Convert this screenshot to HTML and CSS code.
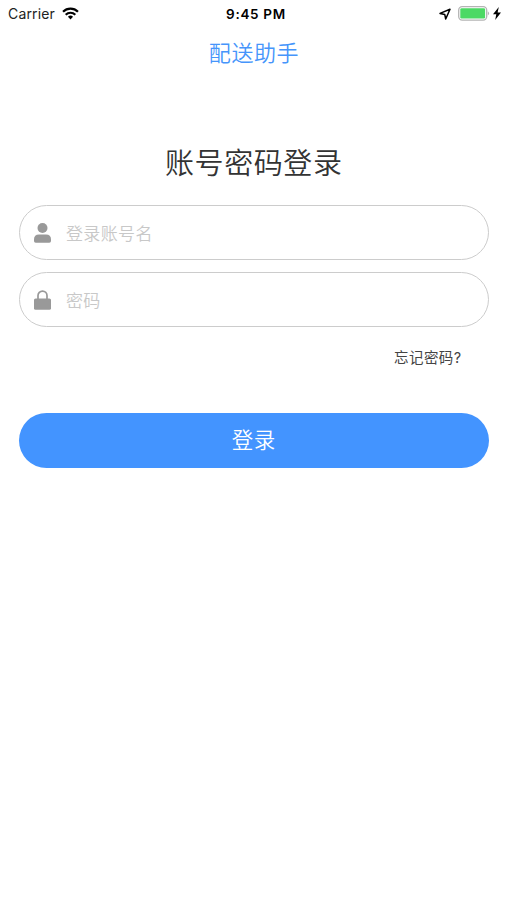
FILE: index.html
```html
<!DOCTYPE html>
<html lang="zh-CN">
<head>
<meta charset="utf-8">
<title>配送助手</title>
<link rel="stylesheet" href="styles.css">
</head>
<body>
<header class="status">
  <div class="status-left"><span class="carrier">Carrier</span>
    <svg class="wifi" viewBox="0 0 18 13" width="17" height="13"><path d="M9 12.800 6.300 10a3.900 3.900 0 0 1 5.400 0z" fill="#000"/><path d="M3.900 7.800a7.300 7.300 0 0 1 10.200 0M1.100 4.600a11.200 11.200 0 0 1 15.800 0" fill="none" stroke="#000" stroke-width="2.300"/></svg>
  </div>
  <div class="time">9:45 PM</div>
  <div class="status-right">
    <svg class="location" viewBox="0 0 12 12" width="12" height="12"><path d="M1 5.400 11 1.200 6.700 11 5.800 6.600z" fill="none" stroke="#000" stroke-width="1.500" stroke-linejoin="round"/></svg>
    <svg class="battery" viewBox="0 0 32 15" width="32" height="15"><rect x=".7" y=".7" width="28" height="13.400" rx="3.500" fill="#fff" stroke="#b4b4b4" stroke-width="1.300"/><rect x="2.300" y="2.300" width="24.800" height="10.200" rx="1.300" fill="#4cd964"/><path d="M29.800 5.200q2.600 2.200 0 4.400z" fill="#b4b4b4"/></svg>
    <svg class="bolt" viewBox="0 0 8 13" width="8" height="13"><path d="M5.800 0 0 7.200h3.300L2.200 13 8 5.400H4.600z"/></svg>
  </div>
</header>
<div class="navbar">配送助手</div>
<main class="login">
  <h1 class="title">账号密码登录</h1>
  <div class="field">
    <svg class="icon" viewBox="0 0 17 20" width="17" height="20"><circle cx="8.500" cy="5" r="5"/><path d="M0 18v-1.500Q0 11.500 5 11.500h7q5 0 5 5V18q0 1.700-1.700 1.700H1.700Q0 19.700 0 18z"/></svg>
    <span>登录账号名</span>
  </div>
  <div class="field">
    <svg class="icon" viewBox="0 0 17 20" width="17" height="20"><rect y="8.500" width="17" height="11.300" rx="1.600"/><path d="M4 9.500V5.600a4.500 4.500 0 0 1 9 0v3.900" fill="none" stroke="#999" stroke-width="1.700"/></svg>
    <span>密码</span>
  </div>
  <a class="forgot">忘记密码?</a>
  <button class="submit">登录</button>
</main>
</body>
</html>
```
FILE: styles.css
```css
* { box-sizing: border-box; }
body { margin: 0; background: #fff; color: #333; font-family: Inter, "Noto Sans CJK SC", sans-serif; }
.status { height: 27px; padding: 0 6px 0 8px; display: grid; grid-template-columns: 1fr auto 1fr; align-items: center; color: #000; }
.status-left, .status-right { display: flex; align-items: center; }
.status-left { gap: 7px; font-size: 14px; color: #222; }
.carrier { letter-spacing: .15px; }
.wifi { margin-bottom: 1px; }
.status-right { justify-content: flex-end; gap: 3px; }
.location { margin-right: 4px; }
.time { padding-left: 3px; font-size: 13.500px; font-weight: 600; letter-spacing: .7px; }
.navbar { height: 50px; padding-left: 1px; text-align: center; font-size: 22px; line-height: 52px; color: #4695fb; letter-spacing: .6px; font-weight: 350; }
.login { padding: 67px 18.500px 0 19px; display: flex; flex-direction: column; }
.title { margin: 0 0 21px; font-size: 29px; line-height: 40px; font-weight: 350; text-align: center; letter-spacing: .6px; }
.field { height: 55px; margin-bottom: 12px; padding-left: 14px; border: 1.500px solid #ccc; border-radius: 28px; display: flex; align-items: center; gap: 15px; color: #c8c8c8; font-size: 17px; font-weight: 350; letter-spacing: .35px; }
.icon { fill: #999; }
.forgot { align-self: flex-end; margin: 8px 27px 43.500px 0; font-size: 14.500px; line-height: 22px; color: #444; letter-spacing: .4px; }
.submit { height: 55px; padding: 0; border: 0; border-radius: 28px; background: #4394ff; color: #fff; font: inherit; font-size: 21.500px; line-height: 53px; font-weight: 350; letter-spacing: .6px; }
```
